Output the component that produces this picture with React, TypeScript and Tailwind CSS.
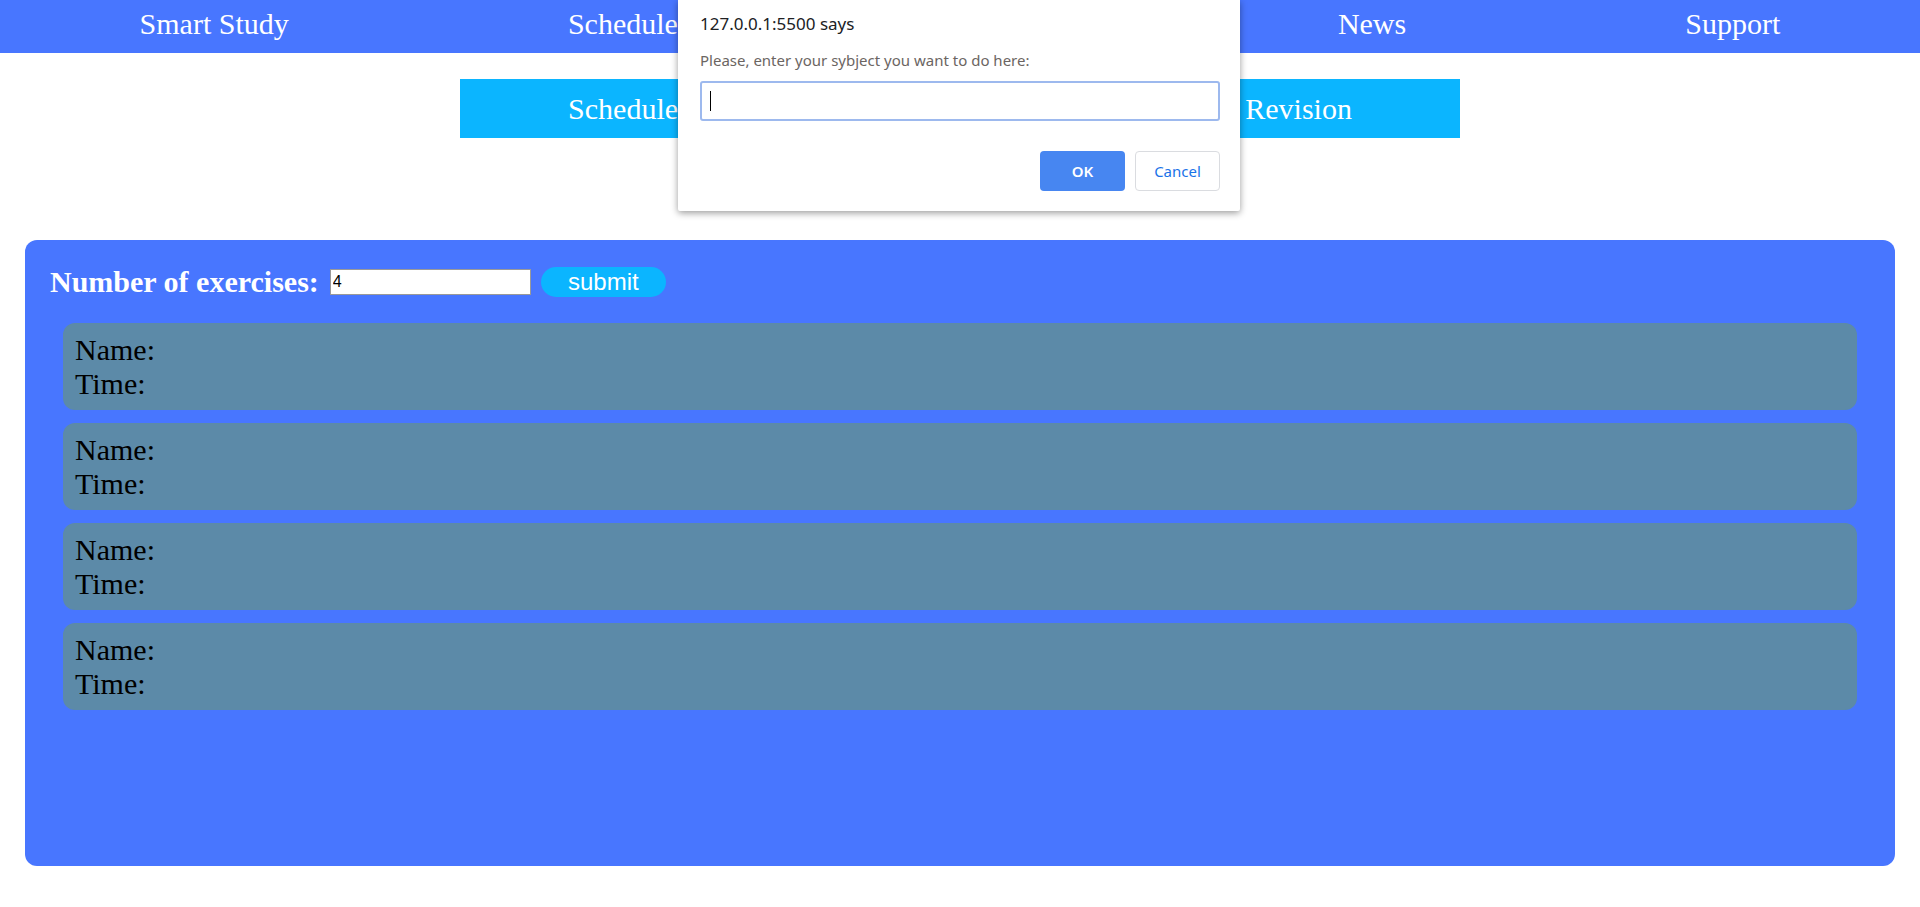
import { useState } from "react";

const topLinks = ["Smart Study", "Schedule", "Subjects", "News", "Support"];
const subLinks = ["Schedule", "Homework", "Revision"];

function PromptDialog() {
  return (
    <div className="absolute left-[678px] top-0 w-[562px] bg-white pl-[22px] pr-[20px] pt-[11px] pb-[20px] rounded-b-[2px] shadow-[0_2px_7px_rgba(0,0,0,0.4)] font-['Noto_Sans','Open_Sans',sans-serif]">
      <div className="text-[17px] leading-[26px] text-[#202124]">127.0.0.1:5500 says</div>
      <div className="mt-[13px] text-[15px] leading-[20px] text-[#6b6562]">Please, enter your sybject you want to do here:</div>
      <div className="mt-[11px] h-[40px] rounded-[3px] border-2 border-[#9db9ee] flex items-center pl-[8px]">
        <div className="w-px h-[20px] bg-black" />
      </div>
      <div className="mt-[30px] flex justify-end gap-[10px]">
        <button className="w-[85px] h-[40px] rounded-[4px] bg-[#4786f1] text-white text-[15px] font-semibold">OK</button>
        <button className="w-[85px] h-[40px] rounded-[4px] border border-[#dadce0] bg-white text-[#1a73e8] text-[15px]">Cancel</button>
      </div>
    </div>
  );
}

export default function App() {
  const [count, setCount] = useState("4");
  const rows = Array.from({ length: Number(count) || 0 });

  return (
    <div className="relative min-h-screen bg-white font-['Liberation_Serif','Times_New_Roman',serif] pb-[41px]">
      <nav className="h-[53px] bg-[#4876ff] flex justify-around items-start pt-[7px] text-white text-[30px]">
        {topLinks.map((l) => (
          <a key={l} className="leading-[34px]">{l}</a>
        ))}
      </nav>

      <div className="mt-[26px] mx-auto w-[1000px] h-[59px] bg-[#0bb5ff] flex justify-around items-center text-white text-[30px]">
        {subLinks.map((l) => (
          <a key={l} className="leading-[34px]">{l}</a>
        ))}
      </div>

      <div className="mt-[102px] mx-[25px] h-[626px] rounded-[12px] bg-[#4876ff] p-[25px]">
        <div className="flex items-center h-[34px]">
          <span className="text-white font-bold text-[30px] leading-[34px]">Number of exercises:</span>
          <input
            value={count}
            onChange={(e) => setCount(e.target.value)}
            className="ml-[11px] w-[201px] h-[26px] bg-white border border-[#999] px-[2px] text-[16px] text-black font-['Liberation_Sans',Arial,sans-serif] outline-none"
          />
          <button className="ml-[10px] w-[125px] h-[30px] rounded-full bg-[#0bb5ff] text-white text-[24px] leading-[30px] font-['Liberation_Sans',Arial,sans-serif]">
            submit
          </button>
        </div>

        <div className="mt-[24px] mx-[13px] flex flex-col gap-[13px]">
          {rows.map((_, i) => (
            <div key={i} className="h-[87px] rounded-[12px] bg-[#5c8aa8] px-[12px] pt-[10px] text-black text-[30px] leading-[34px]">
              <div>Name:</div>
              <div>Time:</div>
            </div>
          ))}
        </div>
      </div>

      <PromptDialog />
    </div>
  );
}
